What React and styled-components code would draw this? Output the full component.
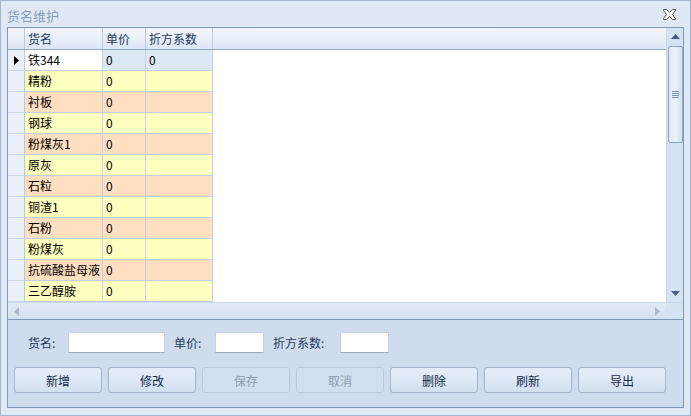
import React from 'react'
import styled, { createGlobalStyle, css } from 'styled-components'

const GlobalStyle = createGlobalStyle`
  html, body { margin: 0; padding: 0; background: #dfe9f5; }
  body { font-family: "Noto Sans CJK SC", "Noto Sans", sans-serif; font-size: 12px; }
`

const FONT = `"Noto Sans CJK SC", "Noto Sans", sans-serif`

const Window = styled.div`
  box-sizing: border-box;
  width: 691px;
  height: 416px;
  border: 1px solid #a6b6cc;
  border-right-color: #9aabc4;
  background: #dfe9f5;
  display: flex;
  flex-direction: column;
  padding: 0 6px 6px 6px;
`

const TitleBar = styled.div`
  height: 26px;
  display: flex;
  align-items: center;
  justify-content: space-between;
  padding-right: 8px;
`

const Title = styled.span`
  font-family: ${FONT};
  font-size: 13px;
  color: #8a9cba;
  line-height: 1;
  margin-top: 2px;
`

const GridFrame = styled.div`
  box-sizing: border-box;
  height: 293px;
  border: 1px solid #7e95b4;
  display: flex;
  flex-direction: column;
  background: #ffffff;
`

const GridTop = styled.div`
  height: 274px;
  display: flex;
`

const DataArea = styled.div`
  flex: 1;
  display: flex;
  flex-direction: column;
  background: #ffffff;
  overflow: hidden;
`

const HeaderRow = styled.div`
  display: flex;
  height: 22px;
  flex: none;
  box-sizing: border-box;
  border-bottom: 1px solid #8fa6c4;
  background: linear-gradient(#f3f7fc, #e6eef8 55%, #dbe6f4);
`

const HeadCell = styled.div`
  box-sizing: border-box;
  width: ${p => p.w}px;
  flex: ${p => (p.fill ? 1 : 'none')};
  border-right: ${p => (p.fill ? 'none' : '1px solid #b9cbe2')};
  color: #1e395b;
  font-family: ${FONT};
  font-size: 12px;
  line-height: 21px;
  padding-left: 3px;
  white-space: nowrap;
`

const Row = styled.div`
  display: flex;
  height: 21px;
  flex: none;
`

const rowColors = {
  current: '#dde8f5',
  yellow: '#ffffc0',
  peach: '#ffdfc0',
}

const Indicator = styled.div`
  box-sizing: border-box;
  width: 17px;
  border-right: 1px solid #b5c9e3;
  border-bottom: 1px solid #c6d7ec;
  background: #e9f0f9;
  display: flex;
  align-items: center;
  justify-content: center;
`

const Cell = styled.div`
  box-sizing: border-box;
  width: ${p => p.w}px;
  border-right: 1px solid #bfd2ea;
  border-bottom: 1px solid #bfd2ea;
  background: ${p => (p.active ? '#ffffff' : rowColors[p.tone])};
  color: #000;
  font-family: ${FONT};
  font-size: 12px;
  line-height: 20px;
  padding-left: 3px;
  white-space: nowrap;
  overflow: hidden;
`

const VScroll = styled.div`
  width: 17px;
  box-sizing: border-box;
  background: #d5e2f2;
  border-left: 1px solid #c8d7ea;
  display: flex;
  flex-direction: column;
  align-items: center;
`

const ArrowBox = styled.div`
  height: 17px;
  width: 100%;
  display: flex;
  align-items: center;
  justify-content: center;
`

const Thumb = styled.div`
  box-sizing: border-box;
  width: 15px;
  height: 97px;
  margin-top: 1px;
  border: 1px solid #8ea5c4;
  border-radius: 2px;
  background: linear-gradient(90deg, #dfe9f6, #e8f0fa 50%, #d3e0f1);
  display: flex;
  flex-direction: column;
  align-items: center;
  justify-content: center;
  gap: 1px;
`

const Grip = styled.span`
  width: 7px;
  height: 1px;
  background: #7d92b0;
`

const Spacer = styled.div`
  flex: 1;
`

const HScrollRow = styled.div`
  height: 17px;
  box-sizing: border-box;
  display: flex;
  border-top: 1px solid #c8d7ea;
`

const HScroll = styled.div`
  flex: 1;
  background: linear-gradient(#e2ebf7, #d4e0f0);
  display: flex;
  align-items: center;
  justify-content: space-between;
  padding: 0 6px;
`

const Corner = styled.div`
  width: 17px;
  background: #d5e2f2;
`

const BottomPanel = styled.div`
  box-sizing: border-box;
  height: 88px;
  border: 1px solid #7e95b4;
  border-top: none;
  background: #cfdcee;
  display: flex;
  flex-direction: column;
  padding: 12px 0 0 6px;
`

const FormRow = styled.div`
  display: flex;
  align-items: center;
  height: 21px;
`

const Label = styled.span`
  font-family: ${FONT};
  font-size: 12px;
  color: #1e395b;
  margin-left: ${p => p.ml}px;
  width: ${p => p.w}px;
`

const Input = styled.div`
  box-sizing: border-box;
  width: ${p => p.w}px;
  height: 21px;
  background: #ffffff;
  border: 1px solid #c6d3e4;
  border-bottom-color: #9aa9bd;
`

const ButtonRow = styled.div`
  display: flex;
  gap: 6px;
  margin-top: 14px;
`

const Button = styled.div`
  box-sizing: border-box;
  width: 88px;
  height: 26px;
  border-radius: 3px;
  display: flex;
  align-items: center;
  justify-content: center;
  font-family: ${FONT};
  font-size: 12px;
  ${p =>
    p.disabled
      ? css`
          border: 1px solid #b9c8dc;
          background: #d1deef;
          color: #8d9db3;
        `
      : css`
          border: 1px solid #a2b3cb;
          background: linear-gradient(#e4eefa, #dde8f6 50%, #d2dfef);
          color: #15294b;
        `}
`

const CloseIcon = () => (
  <svg width="13" height="11" viewBox="0 0 13 11">
    <path
      d="M0.5 0.5 H3.5 L6.5 3.5 L9.5 0.5 H12.5 V1.5 L9.5 5.5 L12.5 9.5 V10.5 H9.5 L6.5 7.5 L3.5 10.5 H0.5 V9.5 L3.5 5.5 L0.5 1.5 Z"
      fill="#ffffff"
      stroke="#4d4d4d"
      strokeWidth="1"
    />
  </svg>
)

const Tri = ({ dir, color = '#4a5d80' }) => {
  const pts = {
    up: '0,5 4.5,0 9,5',
    down: '0,0 9,0 4.5,5',
    left: '5,0 5,9 0,4.5',
    right: '0,0 5,4.5 0,9',
  }[dir]
  const vertical = dir === 'up' || dir === 'down'
  return (
    <svg width={vertical ? 9 : 5} height={vertical ? 5 : 9}>
      <polygon points={pts} fill={color} />
    </svg>
  )
}

const rows = [
  ['铁344', '0', '0'],
  ['精粉', '0', ''],
  ['衬板', '0', ''],
  ['钢球', '0', ''],
  ['粉煤灰1', '0', ''],
  ['原灰', '0', ''],
  ['石粒', '0', ''],
  ['铜渣1', '0', ''],
  ['石粉', '0', ''],
  ['粉煤灰', '0', ''],
  ['抗硫酸盐母液', '0', ''],
  ['三乙醇胺', '0', ''],
]

const cols = [78, 43, 67]
const buttons = [
  ['新增', false],
  ['修改', false],
  ['保存', true],
  ['取消', true],
  ['删除', false],
  ['刷新', false],
  ['导出', false],
]

export default function App() {
  return (
    <>
      <GlobalStyle />
      <Window>
        <TitleBar>
          <Title>货名维护</Title>
          <CloseIcon />
        </TitleBar>

        <GridFrame>
          <GridTop>
            <DataArea>
              <HeaderRow>
                <HeadCell w={17} />
                <HeadCell w={78}>货名</HeadCell>
                <HeadCell w={43}>单价</HeadCell>
                <HeadCell w={67}>折方系数</HeadCell>
                <HeadCell fill />
              </HeaderRow>
              {rows.map((r, i) => {
                const tone = i === 0 ? 'current' : i % 2 === 1 ? 'yellow' : 'peach'
                return (
                  <Row key={i}>
                    <Indicator>{i === 0 && <Tri dir="right" color="#000" />}</Indicator>
                    {r.map((v, j) => (
                      <Cell key={j} w={cols[j]} tone={tone} active={i === 0 && j === 0}>
                        {v}
                      </Cell>
                    ))}
                  </Row>
                )
              })}
            </DataArea>
            <VScroll>
              <ArrowBox><Tri dir="up" /></ArrowBox>
              <Thumb>
                <Grip /><Grip /><Grip /><Grip />
              </Thumb>
              <Spacer />
              <ArrowBox><Tri dir="down" /></ArrowBox>
            </VScroll>
          </GridTop>
          <HScrollRow>
            <HScroll>
              <Tri dir="left" color="#a9b8cc" />
              <Tri dir="right" color="#a9b8cc" />
            </HScroll>
            <Corner />
          </HScrollRow>
        </GridFrame>

        <BottomPanel>
          <FormRow>
            <Label ml={14} w={40}>货名:</Label>
            <Input w={97} />
            <Label ml={9} w={41}>单价:</Label>
            <Input w={49} />
            <Label ml={9} w={67}>折方系数:</Label>
            <Input w={49} />
          </FormRow>
          <ButtonRow>
            {buttons.map(([t, d]) => (
              <Button key={t} disabled={d}>{t}</Button>
            ))}
          </ButtonRow>
        </BottomPanel>
      </Window>
    </>
  )
}
